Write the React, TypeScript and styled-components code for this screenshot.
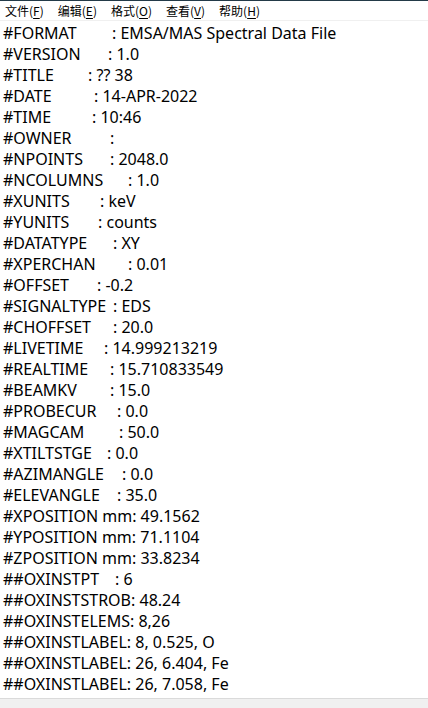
import React from "react";
import styled, { createGlobalStyle } from "styled-components";

const GlobalStyle = createGlobalStyle`
  html, body {
    margin: 0;
    padding: 0;
    background: #ffffff;
    overflow: hidden;
  }
`;

const Window = styled.div`
  width: 428px;
  height: 708px;
  display: flex;
  flex-direction: column;
  background: #ffffff;
  border-top: 1px solid #233a48;
  box-sizing: border-box;
  overflow: hidden;
`;

const MenuBar = styled.div`
  height: 19px;
  display: flex;
  align-items: center;
  gap: 14px;
  padding-left: 5px;
  border-bottom: 1px solid #f0f0f0;
  font-family: "Noto Sans CJK SC", "Noto Sans", sans-serif;
  font-size: 12px;
  color: #000;
`;

const MenuItem = styled.span`
  line-height: 19px;
  u {
    text-decoration: underline;
    text-underline-offset: 2px;
  }
`;

const Editor = styled.div`
  flex: 1;
  overflow: hidden;
  padding: 2px 0 0 3px;
  font-family: "Noto Sans", "Open Sans", sans-serif;
  font-size: 16px;
  line-height: 21px;
  color: #000;
  white-space: pre;
`;

const Line = styled.div`
  height: 21px;
`;

const Key = styled.span<{ $w?: number }>`
  display: inline-block;
  width: ${(p) => (p.$w ? `${p.$w}px` : "auto")};
`;

const HScroll = styled.div`
  height: 9px;
  flex-shrink: 0;
  background: #f0f0f0;
  border-top: 1px solid #dadada;
`;

const menus = [
  ["文件", "F"],
  ["编辑", "E"],
  ["格式", "O"],
  ["查看", "V"],
  ["帮助", "H"],
];

// [key, colon offset, value]
const lines: [string, number | null, string][] = [
  ["#FORMAT", 109, ": EMSA/MAS Spectral Data File"],
  ["#VERSION", 105, ": 1.0"],
  ["#TITLE", 85, ": ?? 38"],
  ["#DATE", 91, ": 14-APR-2022"],
  ["#TIME", 89, ": 10:46"],
  ["#OWNER", 107, ":"],
  ["#NPOINTS", 107, ": 2048.0"],
  ["#NCOLUMNS", 125, ": 1.0"],
  ["#XUNITS", 97, ": keV"],
  ["#YUNITS", 95, ": counts"],
  ["#DATATYPE", 110, ": XY"],
  ["#XPERCHAN", 125, ": 0.01"],
  ["#OFFSET", 94, ": -0.2"],
  ["#SIGNALTYPE", 110, ": EDS"],
  ["#CHOFFSET", 110, ": 20.0"],
  ["#LIVETIME", 101, ": 14.999213219"],
  ["#REALTIME", 107, ": 15.710833549"],
  ["#BEAMKV", 107, ": 15.0"],
  ["#PROBECUR", 114, ": 0.0"],
  ["#MAGCAM", 116, ": 50.0"],
  ["#XTILTSTGE", 104, ": 0.0"],
  ["#AZIMANGLE", 119, ": 0.0"],
  ["#ELEVANGLE", 114, ": 35.0"],
  ["#XPOSITION mm", null, ": 49.1562"],
  ["#YPOSITION mm", null, ": 71.1104"],
  ["#ZPOSITION mm", null, ": 33.8234"],
  ["##OXINSTPT", 112, ": 6"],
  ["##OXINSTSTROB", null, ": 48.24"],
  ["##OXINSTELEMS", null, ": 8,26"],
  ["##OXINSTLABEL", null, ": 8, 0.525, O"],
  ["##OXINSTLABEL", null, ": 26, 6.404, Fe"],
  ["##OXINSTLABEL", null, ": 26, 7.058, Fe"],
  ["##OXINSTLABEL", null, ": 26, 6.930, Fe"],
];

export default function App() {
  return (
    <>
      <GlobalStyle />
      <Window>
        <MenuBar>
          {menus.map(([name, key]) => (
            <MenuItem key={key}>
              {name}(<u>{key}</u>)
            </MenuItem>
          ))}
        </MenuBar>
        <Editor>
          {lines.map(([k, w, v], i) => (
            <Line key={i}>
              {w ? <Key $w={w}>{k}</Key> : k}
              {v}
            </Line>
          ))}
        </Editor>
        <HScroll />
      </Window>
    </>
  );
}
